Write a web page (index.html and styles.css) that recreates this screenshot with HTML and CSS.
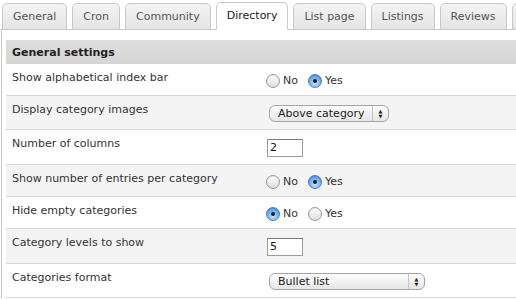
FILE: index.html
```html
<!DOCTYPE html>
<html lang="en">
<head>
    <meta charset="UTF-8">
    <title>Directory settings</title>
    <link rel="stylesheet" href="styles.css">
</head>
<body>
    <div class="settings-page">
        <ul class="tabs">
            <li class="tab">General</li>
            <li class="tab">Cron</li>
            <li class="tab">Community</li>
            <li class="tab active">Directory</li>
            <li class="tab">List page</li>
            <li class="tab">Listings</li>
            <li class="tab">Reviews</li>
            <li class="tab">Search</li>
        </ul>

        <div class="panel">
            <div class="section-title">General settings</div>

            <div class="row">
                <div class="row-label">Show alphabetical index bar</div>
                <div class="row-field">
                    <span class="radio"></span><span class="radio-text">No</span>
                    <span class="radio checked"></span><span class="radio-text">Yes</span>
                </div>
            </div>

            <div class="row alt">
                <div class="row-label">Display category images</div>
                <div class="row-field">
                    <div class="select select-short">
                        <span class="select-value">Above category</span>
                        <span class="select-arrows">&#9650;<br>&#9660;</span>
                    </div>
                </div>
            </div>

            <div class="row">
                <div class="row-label">Number of columns</div>
                <div class="row-field">
                    <div class="text-input">2</div>
                </div>
            </div>

            <div class="row alt">
                <div class="row-label">Show number of entries per category</div>
                <div class="row-field">
                    <span class="radio"></span><span class="radio-text">No</span>
                    <span class="radio checked"></span><span class="radio-text">Yes</span>
                </div>
            </div>

            <div class="row">
                <div class="row-label">Hide empty categories</div>
                <div class="row-field">
                    <span class="radio checked"></span><span class="radio-text">No</span>
                    <span class="radio"></span><span class="radio-text">Yes</span>
                </div>
            </div>

            <div class="row alt">
                <div class="row-label">Category levels to show</div>
                <div class="row-field">
                    <div class="text-input">5</div>
                </div>
            </div>

            <div class="row">
                <div class="row-label">Categories format</div>
                <div class="row-field">
                    <div class="select select-long">
                        <span class="select-value">Bullet list</span>
                        <span class="select-arrows">&#9650;<br>&#9660;</span>
                    </div>
                </div>
            </div>
        </div>
    </div>
</body>
</html>
```

FILE: styles.css
```css
* {
    margin: 0;
    padding: 0;
    box-sizing: border-box;
}

body {
    font-family: 'DejaVu Sans', Verdana, sans-serif;
    font-size: 11px;
    color: #333;
    background: white;
    overflow: hidden;
}

.settings-page {
    width: 516px;
    height: 300px;
    overflow: hidden;
}

/* tabs */
.tabs {
    list-style: none;
    display: flex;
    gap: 5px;
    padding: 3px 0 0 2px;
    border-bottom: 1px solid #c9c9c9;
    white-space: nowrap;
}

.tab {
    flex-shrink: 0;
    height: 27px;
    line-height: 25px;
    padding: 0 10px;
    border: 1px solid #c9c9c9;
    border-radius: 5px 5px 0 0;
    background: linear-gradient(#f4f4f4, #e4e4e4);
    color: #555;
    margin-bottom: -1px;
}

.tab.active {
    background: white;
    color: #222;
    border-bottom-color: white;
    height: 28px;
    margin-top: -1px;
}

/* panel */
.panel {
    margin-left: 1px;
    border-left: 1px solid #c9c9c9;
    padding: 10px 0 0 4px;
}

.section-title {
    height: 24px;
    line-height: 25px;
    padding-left: 6px;
    font-weight: bold;
    color: #222;
    background: linear-gradient(#dddddd, #d5d5d5);
}

.row {
    display: flex;
    align-items: flex-start;
    padding: 7px 6px 7px;
    border-bottom: 1px solid #d6d6d6;
    background: white;
}

.row.alt {
    background: #f4f4f4;
}

.row-label {
    width: 254px;
    line-height: 14px;
    color: #333;
}

.row-field {
    display: flex;
    align-items: center;
    padding-top: 2px;
    min-height: 17px;
}

/* radios */
.radio {
    width: 14px;
    height: 14px;
    border-radius: 50%;
    border: 1px solid #9a9a9a;
    background: linear-gradient(#fdfdfd, #dedede);
    box-shadow: inset 0 1px 1px rgba(0,0,0,0.08);
    display: flex;
    align-items: center;
    justify-content: center;
}

.radio.checked {
    border-color: #4a7cc0;
    background: radial-gradient(circle at 50% 70%, #c9e4ff 0%, #7db7f0 45%, #3f8ae0 100%);
}

.radio.checked::after {
    content: '';
    width: 4px;
    height: 4px;
    border-radius: 50%;
    background: #1c1c1c;
}

.radio-text {
    margin: 0 10px 0 3px;
    color: #333;
}

/* selects */
.select {
    margin-left: 3px;
    height: 17px;
    display: flex;
    align-items: center;
    border: 1px solid #a5a5a5;
    border-radius: 6px;
    background: linear-gradient(#fcfcfc, #e6e6e6);
    color: #222;
}

.select-short {
    width: 120px;
}

.select-long {
    width: 156px;
}

.select-value {
    flex: 1;
    padding-left: 8px;
    line-height: 15px;
}

.select-arrows {
    width: 16px;
    height: 15px;
    border-left: 1px solid #c4c4c4;
    font-size: 5px;
    line-height: 5px;
    text-align: center;
    padding-top: 3px;
    color: #222;
}

/* text inputs */
.text-input {
    margin-left: 1px;
    width: 36px;
    height: 18px;
    line-height: 16px;
    padding-left: 2px;
    border: 1px solid #9c9c9c;
    border-top-color: #7c7c7c;
    background: white;
    color: #111;
}
```
